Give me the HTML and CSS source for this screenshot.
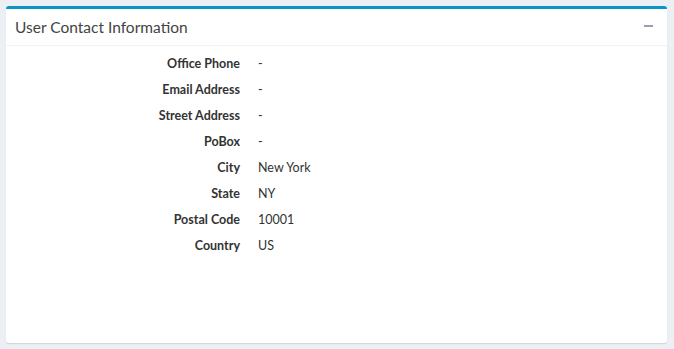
FILE: index.html
```
<!DOCTYPE html>
<html lang="en">
<head>
    <meta charset="UTF-8">
    <title>User Contact Information</title>
    <link rel="stylesheet" href="styles.css">
</head>
<body>

<div class="box">
    <div class="box-header">
        <h3 class="box-title">User Contact Information</h3>
        <button class="btn-collapse" title="Collapse"><span class="minus"></span></button>
    </div>

    <div class="box-body">
        <dl class="info">
            <dt>Office Phone</dt>
            <dd>-</dd>
            <dt>Email Address</dt>
            <dd>-</dd>
            <dt>Street Address</dt>
            <dd>-</dd>
            <dt>PoBox</dt>
            <dd>-</dd>
            <dt>City</dt>
            <dd>New York</dd>
            <dt>State</dt>
            <dd>NY</dd>
            <dt>Postal Code</dt>
            <dd>10001</dd>
            <dt>Country</dt>
            <dd>US</dd>
        </dl>
    </div>
</div>

</body>
</html>
```

FILE: styles.css
```
body {
    font-family: Lato, "Open Sans", Arial, sans-serif;
    margin: 0;
    padding: 6px 7px 6px 6px;
    background-color: #ecf0f5;
    color: #333;
}
.box {
    background-color: white;
    border-top: 3px solid #0a95c4;
    border-radius: 3px;
    box-shadow: 0 1px 1px rgba(0, 0, 0, 0.12);
    height: 334px;
}
.box-header {
    display: flex;
    align-items: center;
    justify-content: space-between;
    height: 36px;
    padding: 0 10px 0 9px;
    border-bottom: 1px solid #f2f2f2;
}
.box-title {
    margin: 0;
    font-size: 15.5px;
    font-weight: normal;
    color: #444;
}
.btn-collapse {
    background: none;
    border: none;
    padding: 4px;
    margin-top: -3px;
    cursor: pointer;
}
.minus {
    display: block;
    width: 9px;
    height: 2px;
    background-color: #97a0b3;
}
.box-body {
    padding: 9px 10px;
}
.info {
    display: grid;
    grid-template-columns: 224px 1fr;
    column-gap: 18px;
    row-gap: 8px;
    margin: 0;
    font-size: 12.5px;
    line-height: 18px;
}
.info dt {
    font-weight: bold;
    text-align: right;
}
.info dd {
    margin: 0;
}
```
